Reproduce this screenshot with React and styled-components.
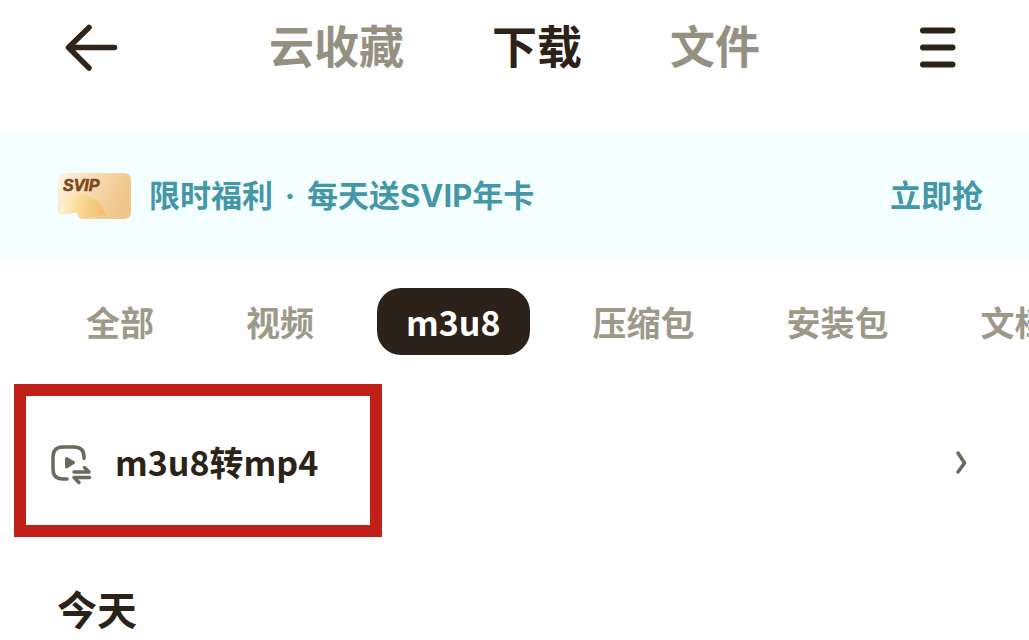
import React, { useState } from "react";
import styled, { createGlobalStyle } from "styled-components";

const TABS = ["云收藏", "下载", "文件"];
const FILTERS = ["全部", "视频", "m3u8", "压缩包", "安装包", "文档"];

const BackIcon = () => (
  <svg width="60" height="60" viewBox="0 0 60 60" fill="none" aria-hidden="true">
    <path
      d="M52.500 29.500H7M27 9.500L6.500 29.500L27 50"
      stroke="#2f251c"
      strokeWidth="5.500"
      strokeLinecap="round"
      strokeLinejoin="round"
    />
  </svg>
);

const MenuIcon = () => (
  <svg width="60" height="60" viewBox="0 0 60 60" fill="none" aria-hidden="true">
    <path
      d="M16 12.500H45.500M16 29.500H45.500M16 46.500H45.500"
      stroke="#2b2519"
      strokeWidth="6"
      strokeLinecap="round"
    />
  </svg>
);

const SvipCard = () => (
  <svg width="74" height="46" viewBox="0 0 74 46" aria-hidden="true">
    <defs>
      <linearGradient id="card" x1="0" y1="0" x2="1" y2="0.3">
        <stop offset="0" stopColor="#fdf6ea" />
        <stop offset="0.4" stopColor="#fadfba" />
        <stop offset="1" stopColor="#efc58b" />
      </linearGradient>
      <linearGradient id="sun" x1="0" y1="0.4" x2="1" y2="0.5">
        <stop offset="0" stopColor="#fdf2d8" />
        <stop offset="0.45" stopColor="#fad98f" />
        <stop offset="1" stopColor="#f0bd70" />
      </linearGradient>
      <clipPath id="shape">
        <path d="M8 0H67Q74 0 74 7V39Q74 46 67 46H25Q22 46 21 42Q20 38 16 40Q9 42 3 41Q1 40 1 36V8Q1 0 8 0Z" />
      </clipPath>
    </defs>
    <g clipPath="url(#shape)">
      <rect width="74" height="46" fill="url(#card)" />
      <path d="M3 34Q10 21 22 21Q42 22 49 42Q36 44 24 46H3Z" fill="url(#sun)" />
    </g>
    <text
      x="6"
      y="18"
      fill="#7b481c"
      stroke="#7b481c"
      strokeWidth="0.6"
      fontFamily="'Liberation Sans', sans-serif"
      fontSize="16"
      fontWeight="700"
      fontStyle="italic"
    >
      SVIP
    </text>
  </svg>
);

const ConvertIcon = () => (
  <svg width="42" height="46" viewBox="0 -5 42 46" fill="none" aria-hidden="true">
    <path
      d="M33 14.500V13Q33 3 23 3H12Q2 3 2 13V25Q2 35 12 35H16"
      stroke="#6b6a5d"
      strokeWidth="3.500"
      strokeLinecap="round"
    />
    <path
      d="M15.500 14.500L22.500 18.500L15.500 23Z"
      fill="#6b6a5d"
      stroke="#6b6a5d"
      strokeWidth="3"
      strokeLinejoin="round"
    />
    <path
      d="M23 28H38L33.500 23.500M38.500 33.500H23L28 38.500"
      stroke="#6b6a5d"
      strokeWidth="3.500"
      strokeLinecap="round"
      strokeLinejoin="round"
    />
  </svg>
);

const ChevronIcon = () => (
  <svg width="12" height="26" viewBox="0 0 12 26" fill="none" aria-hidden="true">
    <path
      d="M3 5L9.500 15L3 24"
      stroke="#6b6a5d"
      strokeWidth="3.500"
      strokeLinecap="round"
      strokeLinejoin="round"
    />
  </svg>
);

const App = () => {
  const [tab, setTab] = useState("下载");
  const [filter, setFilter] = useState("m3u8");

  return (
    <>
      <GlobalStyle />
      <Header>
        <IconBtn type="button" aria-label="返回">
          <BackIcon />
        </IconBtn>
        <Tabs>
          {TABS.map((name) => (
            <TabBtn
              key={name}
              type="button"
              $active={tab === name}
              onClick={() => setTab(name)}
            >
              {name}
            </TabBtn>
          ))}
        </Tabs>
        <IconBtn type="button" aria-label="菜单">
          <MenuIcon />
        </IconBtn>
      </Header>
      <Banner>
        <SvipCard />
        <BannerText>
          限时福利<Dot>·</Dot>每天送SVIP年卡
        </BannerText>
        <BannerLink href="#svip">立即抢</BannerLink>
      </Banner>
      <Filters>
        {FILTERS.map((name) => (
          <FilterBtn
            key={name}
            type="button"
            $active={filter === name}
            onClick={() => setFilter(name)}
          >
            {name}
          </FilterBtn>
        ))}
      </Filters>
      <ConvertRow type="button">
        <Highlight>
          <ConvertIcon />
          m3u8转mp4
        </Highlight>
        <ChevronIcon />
      </ConvertRow>
      <DayTitle>今天</DayTitle>
    </>
  );
};

export default App;

const GlobalStyle = createGlobalStyle`
  * {
    box-sizing: border-box;
  }
  body {
    margin: 0;
    background-color: #fefefe;
    font-family: Inter, "Noto Sans CJK SC", sans-serif;
    font-weight: 700;
    overflow-x: hidden;
  }
  button {
    margin: 0;
    padding: 0;
    border: none;
    background: none;
    font: inherit;
    cursor: pointer;
  }
  svg {
    display: block;
    flex-shrink: 0;
  }
`;

const Header = styled.header`
  display: flex;
  align-items: center;
  justify-content: space-between;
  padding: 18px 62px 56px 62px;
`;

const IconBtn = styled.button`
  height: 60px;
`;

const Tabs = styled.nav`
  display: flex;
  gap: 88px;
`;

const TabBtn = styled.button`
  font-size: 45px;
  line-height: 60px;
  white-space: nowrap;
  color: ${({ $active }) => ($active ? "#2b2318" : "#949182")};
`;

const Banner = styled.section`
  display: flex;
  align-items: center;
  gap: 18px;
  padding: 38px 46px 38px 57px;
  background-color: #f3ffff;
  color: #4597a8;
  font-size: 31px;
  line-height: 48px;
  white-space: nowrap;
`;

const BannerText = styled.span`
  flex: 1;
`;

const Dot = styled.span`
  display: inline-block;
  width: 34px;
  text-align: center;
`;

const BannerLink = styled.a`
  color: inherit;
  text-decoration: none;
`;

const Filters = styled.div`
  display: flex;
  gap: 34px;
  padding: 30px 0 29px 57px;
  overflow: hidden;
`;

const FilterBtn = styled.button`
  flex-shrink: 0;
  && {
    padding: 0 29px;
    font-family: "Noto Sans CJK SC", sans-serif;
  }
  border-radius: 24px;
  font-size: 34px;
  line-height: 67px;
  white-space: nowrap;
  color: ${({ $active }) => ($active ? "#fff" : "#9c998b")};
  background-color: ${({ $active }) => ($active ? "#2c221a" : "transparent")};
`;

const ConvertRow = styled.button`
  display: flex;
  align-items: center;
  justify-content: space-between;
  width: 100%;
  && {
    padding: 0 62px 0 14px;
  }
`;

const Highlight = styled.span`
  display: flex;
  align-items: center;
  gap: 22px;
  padding: 42px 52px 39px 25px;
  border: 12px solid #c12018;
  color: #2b2318;
  font-family: "Noto Sans CJK SC", sans-serif;
  font-size: 34px;
  line-height: 48px;
  white-space: nowrap;
`;

const DayTitle = styled.h2`
  margin: 48px 57px 0;
  font-size: 40px;
  line-height: 52px;
  color: #2b2318;
`;
